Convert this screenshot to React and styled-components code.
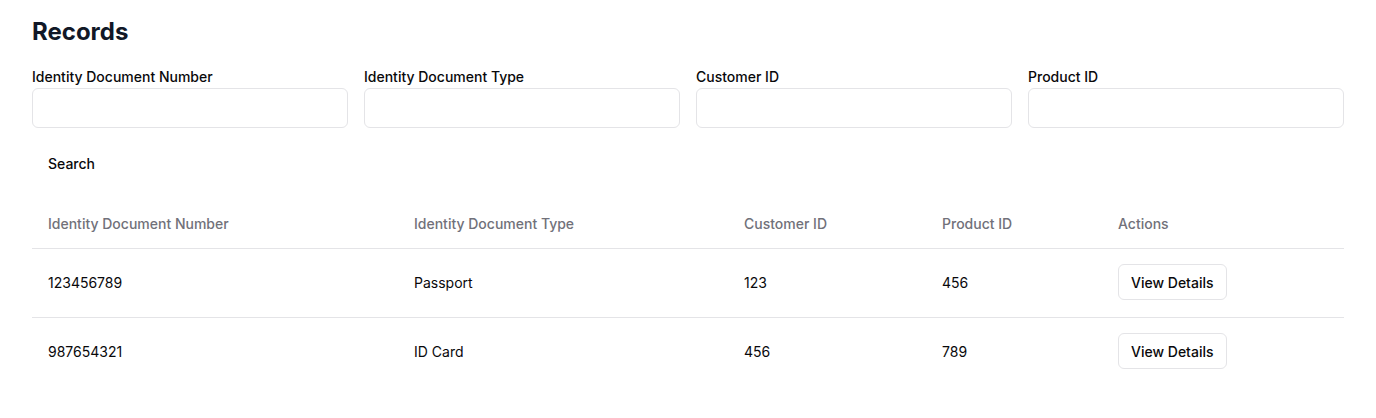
import styled, { createGlobalStyle } from "styled-components";

const GlobalStyle = createGlobalStyle`
  body {
    margin: 0;
    background: #fff;
    font-family: Inter, "Noto Sans", sans-serif;
    color: #09090b;
  }
`;

const Page = styled.div`
  padding: 16px 32px;
`;

const Title = styled.h1`
  margin: 0 0 19px;
  font-size: 24px;
  line-height: 32px;
  font-weight: 700;
  color: #111827;
`;

const FilterGrid = styled.div`
  display: grid;
  grid-template-columns: repeat(4, 1fr);
  gap: 16px;
`;

const Field = styled.label`
  display: flex;
  flex-direction: column;
  gap: 1px;
  font-size: 14px;
  line-height: 20px;
  font-weight: 500;
`;

const Input = styled.input`
  height: 40px;
  box-sizing: border-box;
  border: 1px solid #e4e4e7;
  border-radius: 6px;
  padding: 0 12px;
  font: inherit;
  outline: none;
`;

const GhostButton = styled.button`
  margin-top: 15px;
  height: 40px;
  padding: 0 16px;
  border: none;
  background: transparent;
  font-family: inherit;
  font-size: 14px;
  font-weight: 500;
  color: #09090b;
  border-radius: 6px;
  cursor: pointer;
`;

const Table = styled.table`
  margin-top: 17px;
  width: 100%;
  border-collapse: collapse;
  font-size: 14px;
`;

const Th = styled.th`
  height: 46px;
  padding: 0 16px 2px;
  text-align: left;
  font-weight: 500;
  color: #71717a;
  border-bottom: 1px solid #e4e4e7;
`;

const Td = styled.td`
  padding: 15px 16px 17px;
  height: 36px;
  border-bottom: ${(p) => (p.$last ? "none" : "1px solid #e4e4e7")};
`;

const OutlineButton = styled.button`
  height: 36px;
  padding: 0 12px;
  border: 1px solid #e4e4e7;
  border-radius: 6px;
  background: #fff;
  font-family: inherit;
  font-size: 14px;
  font-weight: 500;
  color: #09090b;
  cursor: pointer;
`;

const records = [
  { num: "123456789", type: "Passport", customer: "123", product: "456" },
  { num: "987654321", type: "ID Card", customer: "456", product: "789" },
];

const fields = [
  "Identity Document Number",
  "Identity Document Type",
  "Customer ID",
  "Product ID",
];

export default function App() {
  return (
    <Page>
      <GlobalStyle />
      <Title>Records</Title>
      <FilterGrid>
        {fields.map((f) => (
          <Field key={f}>
            {f}
            <Input />
          </Field>
        ))}
      </FilterGrid>
      <GhostButton>Search</GhostButton>
      <Table>
        <thead>
          <tr>
            <Th style={{ width: 334 }}>Identity Document Number</Th>
            <Th style={{ width: 298 }}>Identity Document Type</Th>
            <Th style={{ width: 166 }}>Customer ID</Th>
            <Th style={{ width: 144 }}>Product ID</Th>
            <Th>Actions</Th>
          </tr>
        </thead>
        <tbody>
          {records.map((r, i) => {
            const last = i === records.length - 1;
            return (
              <tr key={r.num}>
                <Td $last={last}>{r.num}</Td>
                <Td $last={last}>{r.type}</Td>
                <Td $last={last}>{r.customer}</Td>
                <Td $last={last}>{r.product}</Td>
                <Td $last={last}>
                  <OutlineButton>View Details</OutlineButton>
                </Td>
              </tr>
            );
          })}
        </tbody>
      </Table>
    </Page>
  );
}
